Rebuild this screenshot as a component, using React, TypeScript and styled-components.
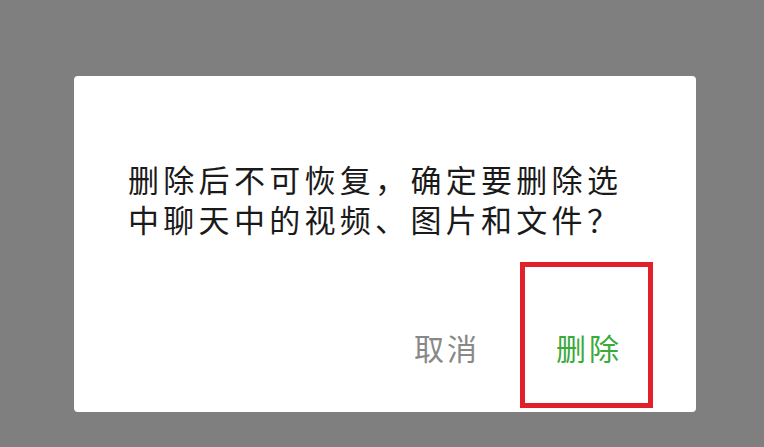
import React from "react";
import styled, { createGlobalStyle } from "styled-components";

const GlobalStyle = createGlobalStyle`
  html, body {
    margin: 0;
    padding: 0;
    background: #7f7f7f;
  }
  body {
    font-family: "Noto Sans CJK SC", "Noto Sans", sans-serif;
  }
`;

const Screen = styled.div`
  width: 764px;
  height: 447px;
  background: #7f7f7f;
  padding: 76px 0 0 74px;
  box-sizing: border-box;
`;

const Dialog = styled.div`
  width: 622px;
  height: 336px;
  background: #ffffff;
  border-radius: 4px;
  box-sizing: border-box;
  padding: 83px 0 0 54px;
  display: flex;
  flex-direction: column;
`;

const Message = styled.p`
  margin: 0;
  max-width: 505px;
  font-size: 31px;
  font-weight: 400;
  line-height: 40px;
  letter-spacing: 4.3px;
  color: #1a1a1a;
`;

const Footer = styled.div`
  margin-top: 88px;
  display: flex;
  justify-content: flex-end;
  gap: 76px;
  padding-right: 74px;
`;

const TextButton = styled.button<{ $tone: "muted" | "primary" }>`
  position: relative;
  border: none;
  background: none;
  padding: 0;
  margin: 0;
  font-family: inherit;
  font-size: 30px;
  line-height: 40px;
  letter-spacing: 3px;
  cursor: pointer;
  color: ${(p) => (p.$tone === "primary" ? "#3aaa3a" : "#888888")};
`;

const Highlight = styled.span`
  position: absolute;
  inset: -65px -31px -41px -36px;
  border: 5px solid #e2202a;
  pointer-events: none;
`;

export default function App() {
  return (
    <>
      <GlobalStyle />
      <Screen>
        <Dialog>
          <Message>删除后不可恢复，确定要删除选中聊天中的视频、图片和文件？</Message>
          <Footer>
            <TextButton $tone="muted">取消</TextButton>
            <TextButton $tone="primary">
              删除
              <Highlight />
            </TextButton>
          </Footer>
        </Dialog>
      </Screen>
    </>
  );
}
